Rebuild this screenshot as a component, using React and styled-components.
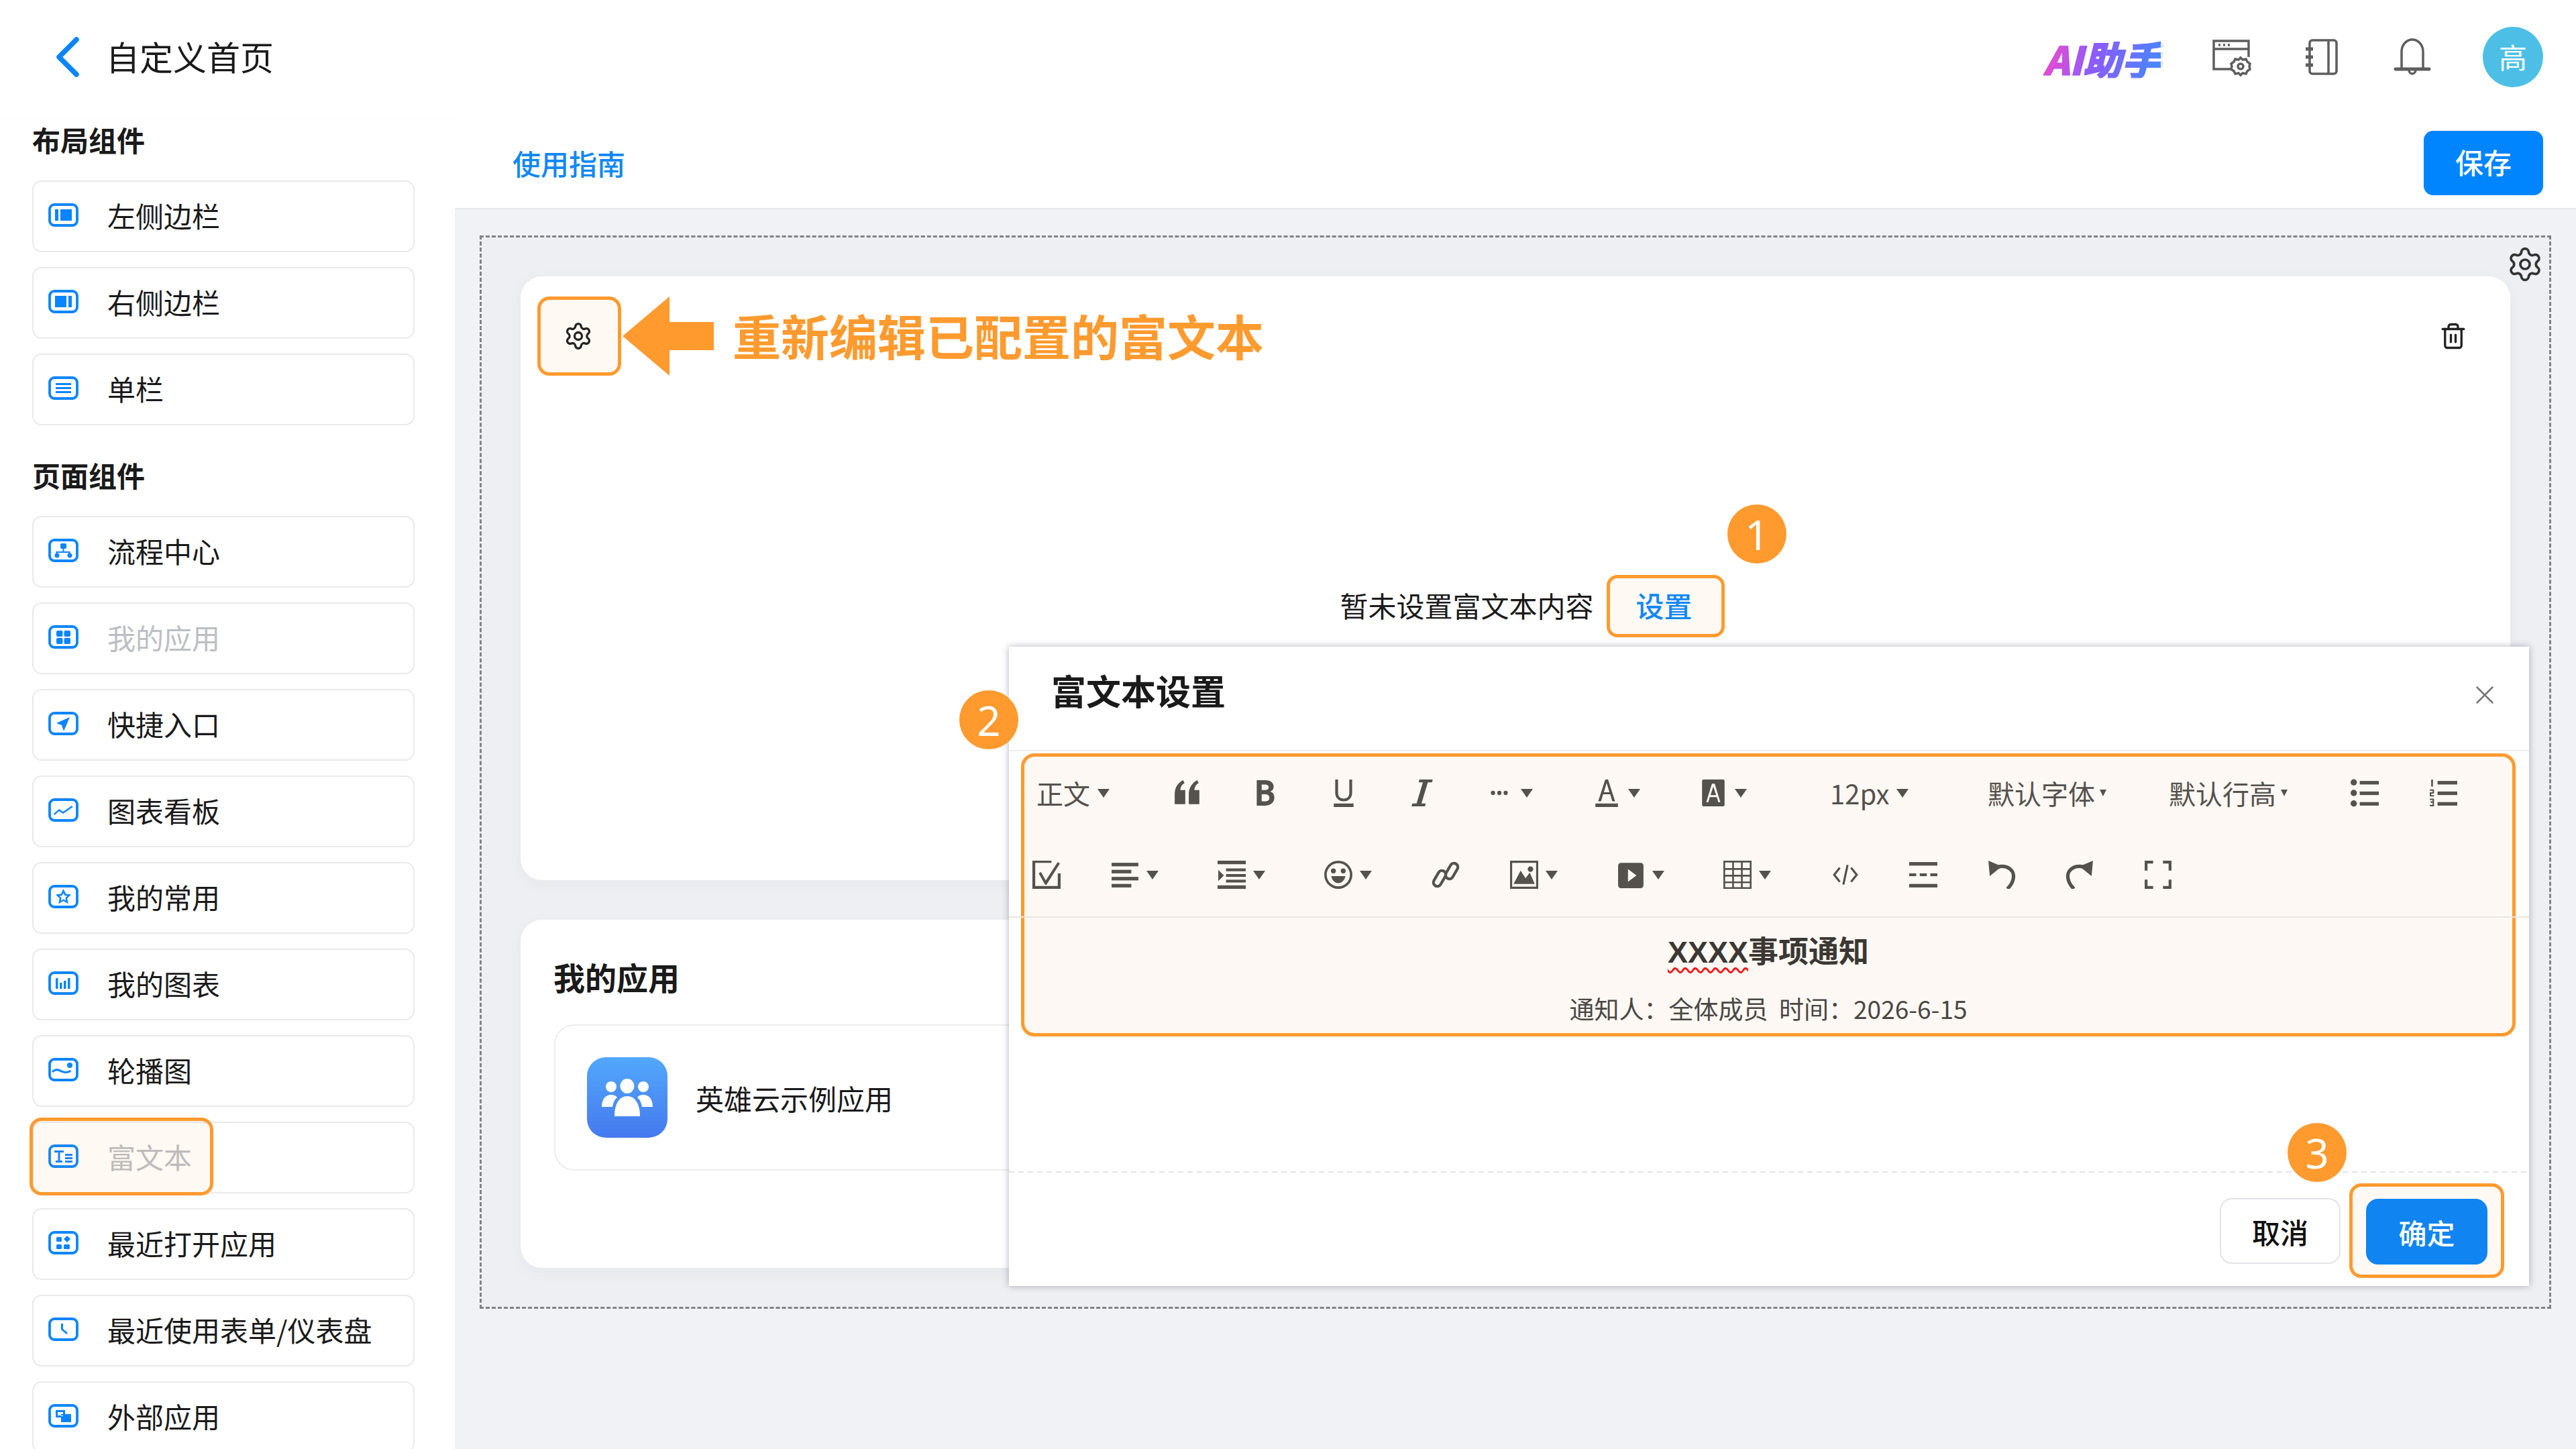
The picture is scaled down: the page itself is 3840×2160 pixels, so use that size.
import styled, { createGlobalStyle } from 'styled-components';
import { Settings, Trash2, X } from 'lucide-react';

const ORANGE = '#ff9a2e';
const BLUE = '#0a85ff';
const INK = '#55514d';

const GlobalStyle = createGlobalStyle`
  * { box-sizing: border-box; }
  html, body { margin: 0; padding: 0; background: #fff; }
  body { font-family: "Noto Sans CJK SC", "Noto Sans", sans-serif; color: #1a1a1a; }
`;

const Page = styled.div`
  position: relative;
  width: 3840px;
  height: 2160px;
  overflow: hidden;
  background: #fff;
`;

const TopBar = styled.header`
  height: 178px;
  display: flex;
  align-items: center;
  padding: 0 49px 8px 80px;
`;

const BackButton = styled.svg`
  width: 42px;
  height: 64px;
  margin-right: 36px;
`;

const PageTitle = styled.h1`
  margin: 0 0 4px;
  font-size: 50px;
  font-weight: 400;
  line-height: 1;
`;

const TopActions = styled.div`
  margin-left: auto;
  display: flex;
  align-items: center;
`;

const AiLogo = styled.div`
  font-size: 58px;
  font-weight: 900;
  font-style: italic;
  line-height: 1;
  margin-right: 75px;
  margin-top: 4px;
  background: linear-gradient(105deg, #ff46c4 0%, #8a5cff 45%, #3f8cff 100%);
  -webkit-background-clip: text;
  background-clip: text;
  color: transparent;
  -webkit-text-stroke: 1px rgba(120, 90, 255, 0.35);
`;

const TopIcon = styled.svg`
  width: 60px;
  height: 60px;
  margin-right: 75px;
  fill: none;
  stroke: #5e5e5e;
  stroke-width: 3.5;
`;

const Avatar = styled.div`
  width: 90px;
  height: 90px;
  border-radius: 50%;
  background: #4dbfe6;
  color: #fff;
  font-size: 42px;
  padding-bottom: 4px;
  display: flex;
  align-items: center;
  justify-content: center;
`;

const Body = styled.div`
  display: flex;
  height: 1982px;
`;

const Sidebar = styled.aside`
  width: 678px;
  flex: none;
  padding: 0 60px 0 48px;
  background: #fff;
  box-shadow: 2px 0 4px rgba(0, 0, 0, 0.03);
`;

const SectionTitle = styled.h3`
  margin: 0 0 31px;
  height: 60px;
  line-height: 60px;
  font-size: 42px;
  font-weight: 700;
`;

const ItemList = styled.div`
  display: flex;
  flex-direction: column;
  gap: 22px;
  margin-bottom: 44px;
`;

const Item = styled.div`
  position: relative;
  height: 107px;
  display: flex;
  align-items: center;
  padding: 0 0 5px 22px;
  border: 2px solid #e9eaec;
  border-radius: 14px;
  background: #fff;
  font-size: 42px;
  color: ${p => (p.$muted ? '#bcbec4' : '#1a1a1a')};
`;

const ItemIcon = styled.svg`
  width: 45px;
  height: 35px;
  flex: none;
  margin-right: 43px;
  fill: ${BLUE};
  stroke: none;
`;

const ItemHighlight = styled.div`
  position: absolute;
  left: -6px;
  top: -8px;
  width: 274px;
  height: 116px;
  border: 5px solid ${ORANGE};
  border-radius: 18px;
  background: rgba(255, 154, 46, 0.06);
`;

const Main = styled.main`
  flex: 1;
  display: flex;
  flex-direction: column;
  background: #f1f2f5;
`;

const MainHeader = styled.div`
  height: 134px;
  flex: none;
  display: flex;
  align-items: center;
  justify-content: space-between;
  padding: 0 49px 0 86px;
  background: #fff;
  border-bottom: 2px solid #e8e9ec;
`;

const GuideLink = styled.a`
  font-size: 42px;
  font-weight: 500;
  margin-bottom: 4px;
  color: #1088f5;
`;

const SaveButton = styled.button`
  width: 178px;
  height: 96px;
  margin-bottom: 2px;
  padding: 0 0 5px;
  border: 0;
  border-radius: 14px;
  background: #0085ff;
  color: #fff;
  font: 500 42px "Noto Sans CJK SC", sans-serif;
`;

const Canvas = styled.div`
  padding: 39px 37px;
`;

const Frame = styled.div`
  position: relative;
  height: 1600px;
  padding: 58px 58px 0;
  border: 3px dashed #808286;
  background: #eeeff3;
  display: flex;
  flex-direction: column;
  gap: 59px;
`;

const FrameGear = styled(Settings)`
  position: absolute;
  right: 8px;
  top: 12px;
  width: 56px;
  height: 56px;
  color: #333;
`;

const Card = styled.section`
  height: ${p => p.$h}px;
  flex: none;
  background: #fff;
  border-radius: 32px;
  box-shadow: 0 6px 24px rgba(30, 40, 70, 0.04);
`;

const CardTop = styled.div`
  display: flex;
  align-items: center;
  padding: 30px 64px 0 25px;
  height: 148px;
`;

const GearBox = styled.div`
  width: 125px;
  height: 118px;
  padding-right: 4px;
  border: 5px solid ${ORANGE};
  border-radius: 18px;
  background: #fff9f4;
  display: flex;
  align-items: center;
  justify-content: center;
  color: #222;
`;

const Arrow = styled.svg`
  width: 138px;
  height: 118px;
  margin-left: 2px;
  fill: ${ORANGE};
`;

const Callout = styled.div`
  margin: 0 0 4px 26px;
  font-size: 72px;
  font-weight: 700;
  line-height: 1;
  color: ${ORANGE};
`;

const CardTrash = styled(Trash2)`
  margin-left: auto;
  width: 42px;
  height: 42px;
  color: #222;
`;

const EmptyState = styled.div`
  display: flex;
  align-items: center;
  justify-content: center;
  gap: 19px;
  margin-top: 297px;
  padding-left: 50px;
  font-size: 42px;
`;

const EmptyText = styled.span`
  margin-bottom: 4px;
`;

const SetButton = styled.div`
  width: 176px;
  height: 93px;
  padding: 0 4px 5px 0;
  border: 5px solid ${ORANGE};
  border-radius: 16px;
  background: #fff9f4;
  color: #1088f5;
  font-weight: 500;
  display: flex;
  align-items: center;
  justify-content: center;
`;

const AppsTitle = styled.h3`
  margin: 0;
  padding: 56px 0 0 49px;
  height: 156px;
  line-height: 58px;
  font-size: 47px;
  font-weight: 700;
`;

const AppTile = styled.div`
  width: 900px;
  height: 218px;
  margin-left: 50px;
  display: flex;
  align-items: center;
  padding-left: 47px;
  border: 2px solid #eceded;
  border-radius: 30px;
`;

const AppIcon = styled.div`
  width: 120px;
  height: 120px;
  margin-right: 42px;
  border-radius: 28px;
  background: linear-gradient(180deg, #52a8fb, #4579ee);
  display: flex;
  align-items: center;
  justify-content: center;
`;

const AppName = styled.span`
  font-size: 42px;
`;

const Modal = styled.div`
  position: absolute;
  left: 1504px;
  top: 964px;
  width: 2266px;
  height: 953px;
  background: #fff;
  display: flex;
  flex-direction: column;
  box-shadow: 0 0 10px rgba(40, 44, 60, 0.35);
`;

const ModalHeader = styled.div`
  height: 156px;
  flex: none;
  display: flex;
  align-items: center;
  justify-content: space-between;
  padding: 0 43px 25px 63px;
  border-bottom: 2px solid #eeeeee;
`;

const ModalTitle = styled.h2`
  margin: 0;
  font-size: 52px;
  font-weight: 700;
`;

const CloseIcon = styled(X)`
  width: 46px;
  height: 46px;
  margin-top: 14px;
  color: #777;
`;

const EditorBox = styled.div`
  position: relative;
  height: 422px;
  flex: none;
  margin: 3px 20px 0 18px;
  border: 5px solid ${ORANGE};
  border-radius: 20px;
  background: #fdf8f3;
`;

const Toolbar = styled.div`
  position: relative;
  height: 240px;
  padding-bottom: 3px;
  &::after {
    content: '';
    position: absolute;
    left: -23px;
    right: -25px;
    bottom: 0;
    height: 2px;
    background: #e9e7e4;
  }
`;

const ToolRow = styled.div`
  display: flex;
  align-items: center;
  height: ${p => p.$h}px;
  margin-top: ${p => p.$mt || 0}px;
  padding-left: ${p => p.$pl}px;
`;

const Tool = styled.div`
  width: ${p => p.$w}px;
  flex: none;
  display: flex;
  align-items: center;
  gap: ${p => p.$gap ?? 11}px;
  color: ${INK};
  font-size: 40px;
`;

const ToolSvg = styled.svg`
  width: 42px;
  height: 42px;
  flex: none;
  fill: ${INK};
  stroke: none;
`;

const Caret = styled.i`
  width: 0;
  height: 0;
  border-left: ${p => (p.$small ? 5 : 9)}px solid transparent;
  border-right: ${p => (p.$small ? 5 : 9)}px solid transparent;
  border-top: ${p => (p.$small ? 10 : 13)}px solid ${INK};
`;

const EditorBody = styled.div`
  padding-top: 22px;
  text-align: center;
  color: #3b3834;
`;

const NoticeTitle = styled.div`
  font-size: 45px;
  font-weight: 700;
  line-height: 52px;
`;

const Squiggly = styled.span`
  font-family: "Liberation Sans", sans-serif;
  text-decoration: underline wavy #f01a1a 3px;
  text-underline-offset: 7px;
`;

const NoticeMeta = styled.div`
  margin-top: 32px;
  font-size: 37px;
  line-height: 50px;
  color: #4a4744;
  white-space: pre;
`;

const ModalFooter = styled.div`
  margin-top: 201px;
  flex: 1;
  display: flex;
  justify-content: flex-end;
  align-items: flex-start;
  gap: 13px;
  padding: 18px 37px 0 0;
  background-image: linear-gradient(90deg, #e3e3e3 60%, transparent 60%);
  background-size: 14px 2px;
  background-repeat: repeat-x;
`;

const CancelButton = styled.button`
  width: 180px;
  height: 98px;
  margin-top: 22px;
  border: 2px solid #e2e4ea;
  border-radius: 18px;
  background: #fff;
  color: #111;
  font: 500 42px "Noto Sans CJK SC", sans-serif;
`;

const ConfirmWrap = styled.div`
  width: 231px;
  height: 141px;
  display: flex;
  align-items: center;
  justify-content: center;
  border: 5px solid ${ORANGE};
  border-radius: 18px;
  background: #fff9f4;
`;

const ConfirmButton = styled.button`
  width: 181px;
  height: 98px;
  margin-top: 3px;
  border: 0;
  border-radius: 18px;
  background: #1085f2;
  color: #fff;
  font: 500 42px "Noto Sans CJK SC", sans-serif;
`;

const StepBadge = styled.div`
  position: absolute;
  left: ${p => p.$x - 44}px;
  top: ${p => p.$y - 44}px;
  width: 88px;
  height: 88px;
  border-radius: 50%;
  background: ${ORANGE};
  color: #fff;
  font: 400 62px "Noto Sans", sans-serif;
  display: flex;
  align-items: center;
  justify-content: center;
`;

// inner glyphs of the sidebar icons, the rounded outline is shared
const sideGlyphs = {
  left: (
    <>
      <rect x="10" y="9" width="5" height="17" />
      <rect x="18" y="9" width="17" height="17" />
    </>
  ),
  right: (
    <>
      <rect x="10" y="9" width="17" height="17" />
      <rect x="30" y="9" width="5" height="17" />
    </>
  ),
  single: (
    <>
      <rect x="11" y="10" width="23" height="3" />
      <rect x="11" y="16" width="23" height="3" />
      <rect x="11" y="22" width="23" height="3" />
    </>
  ),
  flow: (
    <>
      <rect x="18" y="7" width="9" height="8" rx="2" />
      <circle cx="13" cy="25" r="3.5" />
      <circle cx="32" cy="25" r="3.5" />
      <path d="M21.5 15h2v4h9v3h-2v-1h-17v1h-2v-3h10z" />
    </>
  ),
  apps: (
    <>
      <rect x="12" y="8" width="9.5" height="9" rx="2" />
      <rect x="23.5" y="8" width="9.5" height="9" rx="2" />
      <rect x="12" y="19" width="9.5" height="9" rx="2" />
      <rect x="23.5" y="19" width="9.5" height="9" rx="2" />
    </>
  ),
  quick: <path d="M32 8 12 17l8 3 3 9z" />,
  chart: <path d="M8 23l8-7 6 4 13-9 1.5 2-14.500 10-6-4-6.500 6z" />,
  star: (
    <path
      fillRule="evenodd"
      d="M22.500 6l3.600 7.500 8 1-5.900 5.500 1.600 8.200-7.300-4.200-7.300 4.200 1.600-8.200-5.900-5.500 8-1zm0 6l-1.800 3.900-4.200.5 3.100 2.900-.8 4.200 3.700-2.100 3.700 2.100-.8-4.200 3.100-2.900-4.200-.5z"
    />
  ),
  bars: (
    <>
      <rect x="11" y="10" width="3.500" height="16" />
      <rect x="17" y="17" width="3.500" height="9" />
      <rect x="23" y="14" width="3.500" height="12" />
      <rect x="29" y="10" width="3.500" height="16" />
    </>
  ),
  carousel: (
    <>
      <circle cx="32" cy="11" r="4" />
      <path d="M5 20c6-6 10-4 14-2s8 3 14 0l1 3c-7 3-12 2-16 0s-7-3-11 1z" />
    </>
  ),
  richtext: (
    <>
      <path d="M9 9h14v3h-5.500v12H21v3H11v-3h3.500V12H9z" />
      <rect x="25" y="14" width="11" height="3" />
      <rect x="25" y="19" width="11" height="3" />
      <rect x="25" y="24" width="11" height="3" />
    </>
  ),
  recent: (
    <>
      <rect x="12" y="9" width="8" height="7" rx="1.500" />
      <path d="M28 7l5 5-5 5-5-5z" />
      <rect x="12" y="20" width="8" height="7" rx="1.500" />
      <rect x="23" y="20" width="9" height="7" rx="1.500" />
    </>
  ),
  clock: <path d="M19 9h3v8l7 6-2 2-8-7z" />,
  external: (
    <path
      fillRule="evenodd"
      d="M11 9h14v6h9v12H19v-7h-8zm3 3v5h5v-2h3v-3zm8 6v-1h-3v1h3z"
    />
  ),
};

const SideIcon = ({ name }) => (
  <ItemIcon viewBox="0 0 45 35">
    <rect x="2" y="2" width="41" height="31" rx="7" fill="none" stroke={BLUE} strokeWidth="3.800" />
    {sideGlyphs[name]}
  </ItemIcon>
);

const layoutItems = [
  { name: 'left', label: '左侧边栏' },
  { name: 'right', label: '右侧边栏' },
  { name: 'single', label: '单栏' },
];

const pageItems = [
  { name: 'flow', label: '流程中心' },
  { name: 'apps', label: '我的应用', muted: true },
  { name: 'quick', label: '快捷入口' },
  { name: 'chart', label: '图表看板' },
  { name: 'star', label: '我的常用' },
  { name: 'bars', label: '我的图表' },
  { name: 'carousel', label: '轮播图' },
  { name: 'richtext', label: '富文本', muted: true, marked: true },
  { name: 'recent', label: '最近打开应用' },
  { name: 'clock', label: '最近使用表单/仪表盘' },
  { name: 'external', label: '外部应用' },
];

const toolGlyphs = {
  quote: (
    <>
      <path d="M2 22C2 11 8 5 14 2l2 4c-3 2-6 5-6 10h7v20H2z" />
      <path d="M22 22c0-11 6-17 12-20l2 4c-3 2-6 5-6 10h7v20H22z" />
    </>
  ),
  bold: (
    <path
      fillRule="evenodd"
      d="M8 2h12c8 0 12 4 12 9 0 4-2 6-5 7 4 1 6 4 6 9 0 6-5 11-13 11H8zm7 6v8h4c4 0 6-1 6-4s-2-4-6-4zm0 14v10h5c4 0 6-2 6-5s-2-5-6-5z"
    />
  ),
  underline: (
    <>
      <path d="M8 1h4v19c0 5 3 8 8 8s8-3 8-8V1h4v19c0 7-5 12-12 12S8 27 8 20z" />
      <rect x="6" y="35" width="28" height="5" />
    </>
  ),
  italic: <path d="M16 1h19l-1 4h-6l-9 30h6l-1 4H5l1-4h6l9-30h-6z" />,
  dots: (
    <>
      <circle cx="11" cy="20" r="3" />
      <circle cx="20" cy="20" r="3" />
      <circle cx="29" cy="20" r="3" />
    </>
  ),
  color: (
    <>
      <path d="M18 1h4l10 31h-4l-3-10H15l-3 10H8zM16 19h8L20 6z" />
      <rect x="4" y="35" width="32" height="5" />
    </>
  ),
  back: (
    <path
      fillRule="evenodd"
      d="M6 1h28a2 2 0 0 1 2 2v34a2 2 0 0 1-2 2H6a2 2 0 0 1-2-2V3a2 2 0 0 1 2-2zm12 6L10 33h3l2-7h10l2 7h3L22 7zm2 4 4 12h-8z"
    />
  ),
  ul: (
    <>
      <circle cx="4.500" cy="5" r="4.500" />
      <circle cx="4.500" cy="20" r="4.500" />
      <circle cx="4.500" cy="35" r="4.500" />
      <rect x="13" y="3" width="27" height="5" />
      <rect x="13" y="18" width="27" height="5" />
      <rect x="13" y="33" width="27" height="5" />
    </>
  ),
  ol: (
    <>
      <rect x="3" y="1" width="2.500" height="10" />
      <path d="M1 15h6v6H3v2h4v2H1v-6h4v-2H1z" />
      <path d="M1 28h6v11H1v-2h4v-3H2v-2h3v-2H1z" />
      <rect x="12" y="3" width="28" height="5" />
      <rect x="12" y="18" width="28" height="5" />
      <rect x="12" y="33" width="28" height="5" />
    </>
  ),
  check: (
    <>
      <path d="M0 0h27v3H4v33h32V18h4v22H0z" />
      <path d="m9 18 3-2 7 12L36 2l3 2-19 30h-2z" />
    </>
  ),
  align: (
    <>
      <rect x="1" y="3" width="38" height="5" />
      <rect x="1" y="13" width="28" height="5" />
      <rect x="1" y="23" width="38" height="5" />
      <rect x="1" y="33" width="28" height="5" />
    </>
  ),
  indent: (
    <>
      <rect x="0" y="0" width="40" height="5" />
      <rect x="12" y="11" width="28" height="4" />
      <rect x="12" y="19" width="28" height="4" />
      <rect x="12" y="27" width="28" height="4" />
      <rect x="0" y="35" width="40" height="5" />
      <path d="M1 13l8 8-8 8z" />
    </>
  ),
  smile: (
    <path
      fillRule="evenodd"
      d="M20 0a20 20 0 1 1 0 40 20 20 0 0 1 0-40zm0 3.500a16.500 16.500 0 1 0 0 33 16.500 16.500 0 0 0 0-33zM13 11a3.500 3.500 0 1 1 0 7 3.500 3.500 0 0 1 0-7zm14 0a3.500 3.500 0 1 1 0 7 3.500 3.500 0 0 1 0-7zM10 22h20c-1 6-5 10-10 10s-9-4-10-10z"
    />
  ),
  link: (
    <g fill="none" stroke={INK} strokeWidth="4">
      <rect x="-1" y="20" width="24" height="11" rx="5.500" transform="rotate(-60 11 25)" />
      <rect x="17" y="9" width="24" height="11" rx="5.500" transform="rotate(-60 29 15)" />
    </g>
  ),
  image: (
    <path
      fillRule="evenodd"
      d="M0 0h40v40H0zm3 3v34h34V3zm2 30 10-19 7 11 6-8 7 16zm24-25a4 4 0 1 1 0 8 4 4 0 0 1 0-8z"
    />
  ),
  video: (
    <path
      fillRule="evenodd"
      d="M6 3h28a4 4 0 0 1 4 4v28a4 4 0 0 1-4 4H6a4 4 0 0 1-4-4V7a4 4 0 0 1 4-4zm10 9v18l12-9z"
    />
  ),
  table: (
    <path
      fillRule="evenodd"
      d="M0 0h40v40H0zm2.500 2.500v8h10v-8zm12.500 0v8h10v-8zm12.500 0v8h10v-8zM2.500 13v7h10v-7zM15 13v7h10v-7zm12.500 0v7h10v-7zM2.500 22.500v7h10v-7zm12.500 0v7h10v-7zm12.500 0v7h10v-7zM2.500 32v5.500h10V32zM15 32v5.500h10V32zm12.500 0v5.500h10V32z"
    />
  ),
  code: (
    <path
      fill="none"
      stroke={INK}
      strokeWidth="3"
      d="M12 10 4 20l8 10M28 10l8 10-8 10M23 6l-6 28"
    />
  ),
  rule: (
    <>
      <rect x="0" y="2" width="40" height="5" />
      <rect x="0" y="33" width="40" height="5" />
      <rect x="0" y="18" width="10" height="4" />
      <rect x="15" y="18" width="10" height="4" />
      <rect x="30" y="18" width="10" height="4" />
    </>
  ),
  undo: (
    <>
      <path fill="none" stroke={INK} strokeWidth="5" d="M8 11c18-8 32 2 28 16-1 5-4 9-8 13" />
      <path d="M1 0l2 22 17-14z" />
    </>
  ),
  redo: (
    <>
      <path fill="none" stroke={INK} strokeWidth="5" d="M32 11C14 3 0 13 4 27c1 5 4 9 8 13" />
      <path d="M39 0l-2 22-17-14z" />
    </>
  ),
  full: (
    <path d="M1 0h12v4H5v10H1zM27 0h12v14h-4V4h-8zM1 27h4v9h8v4H1zM35 27h4v13H27v-4h8z" />
  ),
};

const ToolIcon = ({ name }) => <ToolSvg viewBox="0 0 40 40">{toolGlyphs[name]}</ToolSvg>;

const rowOne = [
  { text: '正文', w: 204 },
  { icon: 'quote', w: 116 },
  { icon: 'bold', w: 117 },
  { icon: 'underline', w: 117 },
  { icon: 'italic', w: 115 },
  { icon: 'dots', w: 160, caret: true },
  { icon: 'color', w: 159, caret: true },
  { icon: 'back', w: 195, caret: true },
  { text: '12px', w: 235, caret: true },
  { text: '默认字体', w: 270, small: true, gap: 7 },
  { text: '默认行高', w: 271, small: true, gap: 7 },
  { icon: 'ul', w: 117 },
  { icon: 'ol', w: 60 },
];

const rowTwo = [
  { icon: 'check', w: 117 },
  { icon: 'align', w: 159, caret: true },
  { icon: 'indent', w: 159, caret: true },
  { icon: 'smile', w: 160, caret: true },
  { icon: 'link', w: 117 },
  { icon: 'image', w: 159, caret: true },
  { icon: 'video', w: 159, caret: true },
  { icon: 'table', w: 161, caret: true },
  { icon: 'code', w: 116 },
  { icon: 'rule', w: 117 },
  { icon: 'undo', w: 116 },
  { icon: 'redo', w: 117 },
  { icon: 'full', w: 60 },
];

const ToolItems = ({ items }) =>
  items.map(({ text, icon, w, caret, small, gap }) => (
    <Tool key={text || icon} $w={w} $gap={gap}>
      {icon ? <ToolIcon name={icon} /> : text}
      {(caret || small || text === '正文') && <Caret $small={small} />}
    </Tool>
  ));

const SideItems = ({ items }) => (
  <ItemList>
    {items.map(({ name, label, muted, marked }) => (
      <Item key={name} $muted={muted}>
        <SideIcon name={name} />
        {label}
        {marked && <ItemHighlight />}
      </Item>
    ))}
  </ItemList>
);

export default function App() {
  return (
    <Page>
      <GlobalStyle />
      <TopBar>
        <BackButton viewBox="0 0 42 64">
          <path d="M34 6 8 32l26 26" fill="none" stroke={BLUE} strokeWidth="7.500" strokeLinecap="round" strokeLinejoin="round" />
        </BackButton>
        <PageTitle>自定义首页</PageTitle>
        <TopActions>
          <AiLogo>AI助手</AiLogo>
          <TopIcon viewBox="0 0 60 60">
            <path d="M30 48H4V6h52v24" />
            <path d="M4 18h52" />
            <path d="M11 12h3M18 12h3M25 12h3" />
            <circle cx="44" cy="44" r="4" />
            <path d="M44 31l3 3 5-1 2 4 4 3-1 4 1 4-4 3-2 4-5-1-3 3-3-3-5 1-2-4-4-3 1-4-1-4 4-3 2-4 5 1z" />
          </TopIcon>
          <TopIcon viewBox="0 0 60 60">
            <rect x="12" y="5" width="40" height="50" rx="4" />
            <path d="M40 5v50" />
            <path d="M6 18h11M6 30h11M6 42h11" strokeWidth="5" />
          </TopIcon>
          <TopIcon viewBox="0 0 60 60">
            <path d="M14 48V22a16 18 0 0 1 32 0v26" />
            <path d="M5 48h50" strokeWidth="5" strokeLinecap="round" />
            <path d="M25 49a5 6 0 0 0 10 0" />
          </TopIcon>
          <Avatar>高</Avatar>
        </TopActions>
      </TopBar>

      <Body>
        <Sidebar>
          <SectionTitle>布局组件</SectionTitle>
          <SideItems items={layoutItems} />
          <SectionTitle>页面组件</SectionTitle>
          <SideItems items={pageItems} />
        </Sidebar>

        <Main>
          <MainHeader>
            <GuideLink>使用指南</GuideLink>
            <SaveButton>保存</SaveButton>
          </MainHeader>
          <Canvas>
            <Frame>
              <FrameGear strokeWidth={1.6} />
              <Card $h={900}>
                <CardTop>
                  <GearBox>
                    <Settings size={44} strokeWidth={1.8} />
                  </GearBox>
                  <Arrow viewBox="0 0 138 118">
                    <path d="M0 59 70 0v38h66v42H70v38z" />
                  </Arrow>
                  <Callout>重新编辑已配置的富文本</Callout>
                  <CardTrash strokeWidth={1.9} />
                </CardTop>
                <EmptyState>
                  <EmptyText>暂未设置富文本内容</EmptyText>
                  <SetButton>设置</SetButton>
                </EmptyState>
              </Card>
              <Card $h={519}>
                <AppsTitle>我的应用</AppsTitle>
                <AppTile>
                  <AppIcon>
                    <svg width="76" height="56" viewBox="0 0 76 56" fill="#fff">
                      <ellipse cx="38" cy="11" rx="10.500" ry="11" />
                      <circle cx="14" cy="12" r="8" />
                      <circle cx="62" cy="12" r="8" />
                      <path d="M0 42c0-12 6-18 14-18 4 0 7 1 9 4-4 3-6 8-7 14z" />
                      <path d="M76 42c0-12-6-18-14-18-4 0-7 1-9 4 4 3 6 8 7 14z" />
                      <path d="M19 56c0-18 7-30 19-30s19 12 19 30z" />
                    </svg>
                  </AppIcon>
                  <AppName>英雄云示例应用</AppName>
                </AppTile>
              </Card>
            </Frame>
          </Canvas>
        </Main>
      </Body>

      <Modal>
        <ModalHeader>
          <ModalTitle>富文本设置</ModalTitle>
          <CloseIcon strokeWidth={1.300} />
        </ModalHeader>
        <EditorBox>
          <Toolbar>
            <ToolRow $h={108} $pl={18}>
              <ToolItems items={rowOne} />
            </ToolRow>
            <ToolRow $h={122} $mt={7} $pl={12}>
              <ToolItems items={rowTwo} />
            </ToolRow>
          </Toolbar>
          <EditorBody>
            <NoticeTitle>
              <Squiggly>XXXX</Squiggly>事项通知
            </NoticeTitle>
            <NoticeMeta>通知人：全体成员  时间：2026-6-15</NoticeMeta>
          </EditorBody>
        </EditorBox>
        <ModalFooter>
          <CancelButton>取消</CancelButton>
          <ConfirmWrap>
            <ConfirmButton>确定</ConfirmButton>
          </ConfirmWrap>
        </ModalFooter>
      </Modal>

      <StepBadge $x={2619} $y={796}>1</StepBadge>
      <StepBadge $x={1474} $y={1073}>2</StepBadge>
      <StepBadge $x={3454} $y={1718}>3</StepBadge>
    </Page>
  );
}
